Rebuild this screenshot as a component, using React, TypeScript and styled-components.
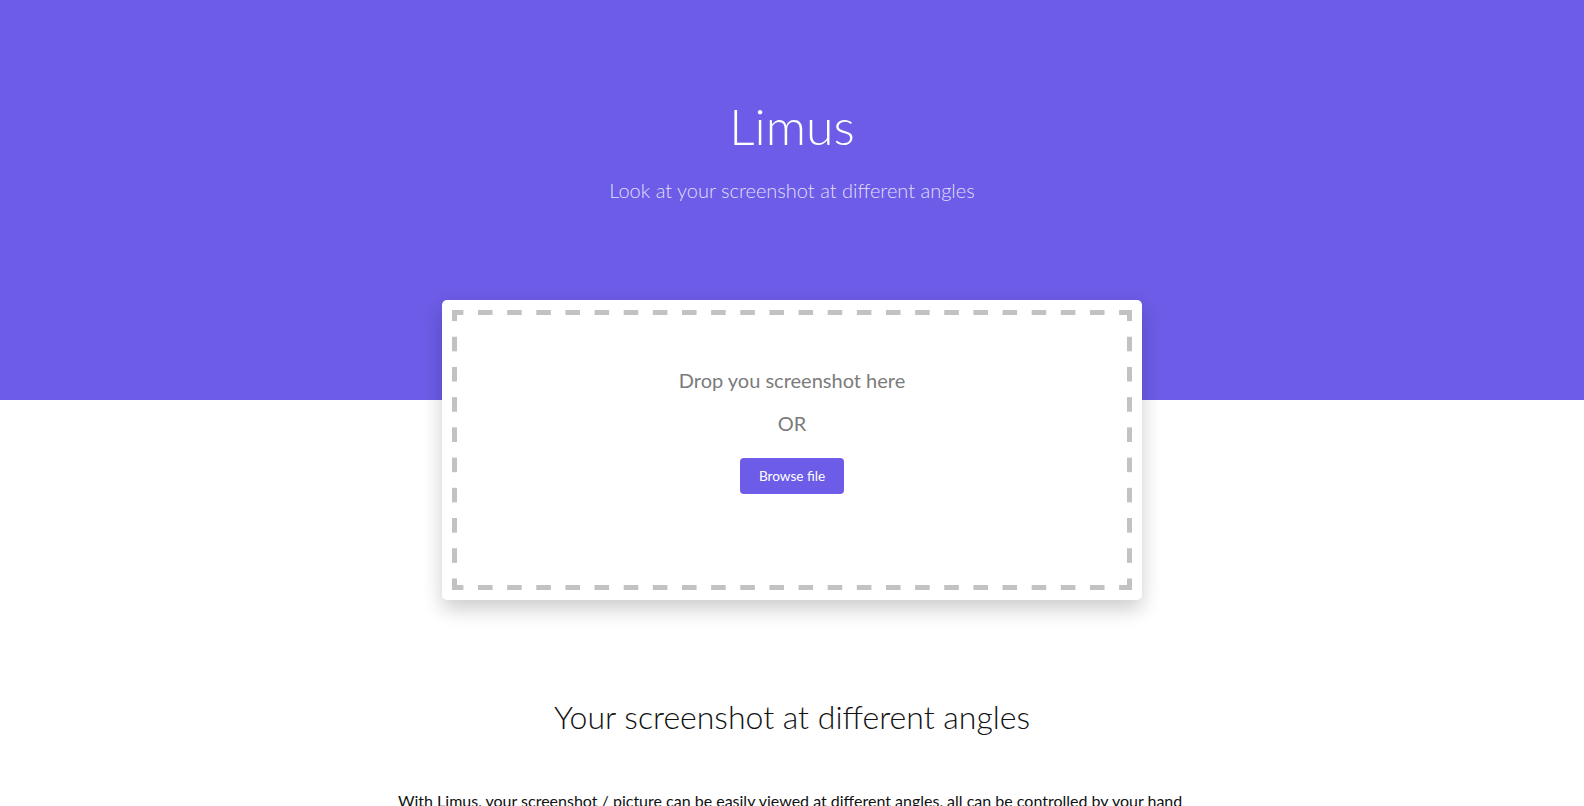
import React from "react";
import styled, { createGlobalStyle } from "styled-components";

const GlobalStyle = createGlobalStyle`
  * { box-sizing: border-box; }
  html, body { margin: 0; padding: 0; background: #ffffff; }
  body { font-family: Lato, "Open Sans", sans-serif; color: #111; }
`;

const Hero = styled.header`
  height: 400px;
  background: #6c5ce7;
  display: flex;
  flex-direction: column;
  align-items: center;
  padding-top: 96px;
`;

const Title = styled.h1`
  margin: 0;
  font-family: Lato, sans-serif;
  font-weight: 300;
  font-size: 50px;
  line-height: 1.2;
  color: #ffffff;
`;

const Subtitle = styled.p`
  margin: 22px 0 0;
  font-family: Lato, sans-serif;
  font-weight: 300;
  font-size: 20px;
  line-height: 1.2;
  color: rgba(255, 255, 255, 0.82);
`;

const UploadSection = styled.section`
  display: flex;
  justify-content: center;
  margin-top: -100px;
  position: relative;
`;

const Card = styled.div`
  width: 700px;
  height: 300px;
  background: #ffffff;
  border-radius: 5px;
  padding: 10px;
  box-shadow: 0 9px 20px rgba(0, 0, 0, 0.2);
`;

const dash = "#c2c2c2";

const DropZone = styled.div`
  height: 100%;
  display: flex;
  flex-direction: column;
  align-items: center;
  padding-top: 55px;
  background-image:
    linear-gradient(to right, ${dash} 15px, transparent 15px),
    linear-gradient(to right, ${dash} 15px, transparent 15px),
    linear-gradient(to bottom, ${dash} 15px, transparent 15px),
    linear-gradient(to bottom, ${dash} 15px, transparent 15px);
  background-size: 29.15px 5px, 29.15px 5px, 5px 30.23px, 5px 30.23px;
  background-repeat: repeat-x, repeat-x, repeat-y, repeat-y;
  background-position: -3.15px 0, -3.15px 100%, 0 -3.53px, 100% -3.53px;
`;

const DropText = styled.p<{ $gap?: number }>`
  margin: ${(p) => p.$gap ?? 0}px 0 0;
  font-family: Lato, sans-serif;
  font-weight: 400;
  font-size: 20px;
  line-height: 1.5;
  color: #7b7b7b;
`;

const BrowseButton = styled.button`
  margin-top: 20px;
  height: 36px;
  padding: 0 19px;
  border: none;
  border-radius: 4px;
  background: #6c5ce7;
  color: #ffffff;
  font-family: Lato, sans-serif;
  font-size: 13.6px;
  cursor: pointer;
`;

const AnglesSection = styled.section`
  display: flex;
  flex-direction: column;
  align-items: center;
  padding-top: 98px;
`;

const SectionTitle = styled.h2`
  margin: 0;
  font-family: Lato, sans-serif;
  font-weight: 300;
  font-size: 32px;
  line-height: 1.2;
  color: #111111;
`;

const Body = styled.p`
  width: 788px;
  margin: 53px 0 0;
  font-family: Lato, sans-serif;
  font-weight: 400;
  font-size: 16px;
  line-height: 1.5;
  color: #111111;
  text-align: left;
`;

export default function App() {
  return (
    <>
      <GlobalStyle />
      <Hero>
        <Title>Limus</Title>
        <Subtitle>Look at your screenshot at different angles</Subtitle>
      </Hero>
      <UploadSection>
        <Card>
          <DropZone>
            <DropText>Drop you screenshot here</DropText>
            <DropText $gap={13}>OR</DropText>
            <BrowseButton type="button">Browse file</BrowseButton>
          </DropZone>
        </Card>
      </UploadSection>
      <AnglesSection>
        <SectionTitle>Your screenshot at different angles</SectionTitle>
        <Body>
          With Limus, your screenshot / picture can be easily viewed at different angles, all can be controlled by your hand
        </Body>
      </AnglesSection>
    </>
  );
}
